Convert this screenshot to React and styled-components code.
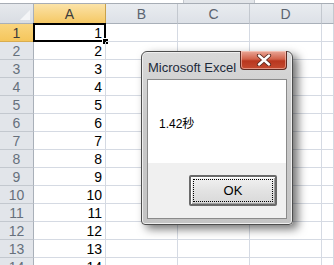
import React from "react";
import styled, { createGlobalStyle } from "styled-components";

const GlobalStyle = createGlobalStyle`
    html, body {
        margin: 0;
        padding: 0;
        background: #ffffff;
        overflow: hidden;
    }
`;

const COLUMNS = ["A", "B", "C", "D", ""];
const ROWS = Array.from({ length: 14 }, (_, i) => i + 1);

const App = () => {
    return (
        <Page>
            <GlobalStyle />
            <TopStrip>
                <ScrollStub />
            </TopStrip>
            <Sheet>
                <Corner />
                {COLUMNS.map((c, i) => (
                    <ColHeader key={c + i} $active={c === "A"}>
                        {c}
                    </ColHeader>
                ))}
                {ROWS.map((r) => (
                    <React.Fragment key={r}>
                        <RowHeader $active={r === 1}>{r}</RowHeader>
                        <Cell $active={r === 1}>{r}</Cell>
                        <Cell />
                        <Cell />
                        <Cell />
                        <Cell />
                    </React.Fragment>
                ))}
            </Sheet>

            <Dialog>
                <TitleBar>
                    <Title>Microsoft Excel</Title>
                    <CloseButton>
                        <svg width="16" height="12" viewBox="0 0 16 12">
                            <path
                                d="M3 1.5 L13 10.5 M13 1.5 L3 10.5"
                                stroke="#5a2a20"
                                strokeWidth="4.2"
                                strokeLinecap="round"
                            />
                            <path
                                d="M3 1.5 L13 10.5 M13 1.5 L3 10.5"
                                stroke="#ffffff"
                                strokeWidth="2.4"
                                strokeLinecap="round"
                            />
                        </svg>
                    </CloseButton>
                </TitleBar>
                <Body>
                    <Message>1.42秒</Message>
                    <ButtonBar>
                        <OkButton>
                            <FocusRing>OK</FocusRing>
                        </OkButton>
                    </ButtonBar>
                </Body>
            </Dialog>
        </Page>
    );
};

export default App;

const Page = styled.div`
    position: relative;
    width: 334px;
    height: 265px;
    overflow: hidden;
    font-family: "Liberation Sans", Arial, sans-serif;
`;

const TopStrip = styled.div`
    height: 3px;
    border-bottom: 1px solid #a7adb5;
    display: flex;
    justify-content: flex-start;
`;

const ScrollStub = styled.div`
    margin-left: 183px;
    width: 70px;
    height: 3px;
    background: #e3e6ea;
    border-left: 1px solid #c4c8ce;
    border-right: 1px solid #c4c8ce;
`;

const Sheet = styled.div`
    display: grid;
    grid-template-columns: 34px 72px 72px 72px 72px 1fr;
    grid-auto-rows: 18px;
    grid-template-rows: 20px;
`;

const Corner = styled.div`
    position: relative;
    background: linear-gradient(#e6e9ed, #d9dde3);
    border-right: 1px solid #a9b0b9;
    border-bottom: 1px solid #a9b0b9;
    box-sizing: border-box;

    &::after {
        content: "";
        position: absolute;
        right: 3px;
        bottom: 3px;
        width: 0;
        height: 0;
        border-left: 10px solid transparent;
        border-bottom: 10px solid #f4f5f7;
    }
`;

const ColHeader = styled.div`
    box-sizing: border-box;
    display: flex;
    align-items: center;
    justify-content: center;
    background: ${(p) =>
        p.$active
            ? "linear-gradient(#fbe3a8, #f5c865)"
            : "linear-gradient(#e9ecf0, #dde1e7)"};
    border-right: 1px solid ${(p) => (p.$active ? "#c9a24a" : "#c3c8cf")};
    border-bottom: 1px solid ${(p) => (p.$active ? "#c9a24a" : "#a9b0b9")};
    color: ${(p) => (p.$active ? "#3c3c3c" : "#5b6470")};
    font-size: 14px;
    padding-top: 1px;
`;

const RowHeader = styled.div`
    box-sizing: border-box;
    display: flex;
    align-items: center;
    justify-content: center;
    background: ${(p) => (p.$active ? "linear-gradient(#f9d57f, #f5c65c)" : "#e2e5ea")};
    border-right: 1px solid #a9b0b9;
    border-bottom: 1px solid ${(p) => (p.$active ? "#d9ad4f" : "#c3c8cf")};
    color: ${(p) => (p.$active ? "#3c3c3c" : "#66707c")};
    font-size: 14px;
`;

const Cell = styled.div`
    position: relative;
    box-sizing: border-box;
    display: flex;
    align-items: center;
    justify-content: flex-end;
    padding-right: 3px;
    border-right: 1px solid #d5dae3;
    border-bottom: 1px solid #d5dae3;
    color: #000000;
    font-size: 14px;
    line-height: 1;

    ${(p) =>
        p.$active &&
        `
        &::before {
            content: "";
            position: absolute;
            left: -1px;
            top: -1px;
            right: -1px;
            bottom: -1px;
            border: 2px solid #000000;
            pointer-events: none;
        }
        &::after {
            content: "";
            position: absolute;
            right: -4px;
            bottom: -4px;
            width: 5px;
            height: 5px;
            background: #000000;
            border: 1px solid #ffffff;
        }
    `}
`;

const Dialog = styled.div`
    position: absolute;
    left: 141px;
    top: 51px;
    width: 152px;
    height: 174px;
    box-sizing: border-box;
    display: flex;
    flex-direction: column;
    background: linear-gradient(#d9d9d9, #c9c9c9 40%, #c4c4c4);
    border: 1px solid #4d4d4d;
    border-radius: 6px 6px 4px 4px;
    box-shadow: 5px 4px 10px rgba(0, 0, 0, 0.55), inset 0 0 0 1px #efefef;
    padding: 0 5px 5px 5px;
`;

const TitleBar = styled.div`
    position: relative;
    height: 27px;
    display: flex;
    align-items: center;
    padding-left: 1px;
`;

const Title = styled.span`
    font-family: "Liberation Sans", Arial, sans-serif;
    font-size: 13px;
    color: #1d2a3a;
    padding-top: 3px;
`;

const CloseButton = styled.div`
    position: absolute;
    right: 0px;
    top: -1px;
    width: 47px;
    height: 19px;
    box-sizing: border-box;
    display: flex;
    align-items: center;
    justify-content: center;
    background: linear-gradient(#e9a898, #d2624a 45%, #b8371f 55%, #c44a30);
    border: 1px solid #5e2a22;
    border-top: none;
    border-radius: 0 0 4px 4px;
    box-shadow: inset 0 0 0 1px rgba(255, 220, 210, 0.5);
`;

const Body = styled.div`
    flex: 1;
    display: flex;
    flex-direction: column;
    border: 1px solid #8a8a8a;
    background: #f0f0f0;
`;

const Message = styled.div`
    height: 83px;
    box-sizing: border-box;
    background: #ffffff;
    padding: 34px 0 0 11px;
    font-family: "Liberation Sans", "Noto Sans CJK JP", sans-serif;
    font-size: 12px;
    color: #000000;
`;

const ButtonBar = styled.div`
    flex: 1;
    display: flex;
    justify-content: flex-end;
    align-items: flex-start;
    padding: 12px 9px 0 0;
`;

const OkButton = styled.div`
    width: 88px;
    height: 31px;
    box-sizing: border-box;
    border: 2px solid #6a6a6a;
    border-radius: 2px;
    background: linear-gradient(#f2f2f2, #e3e3e3 50%, #d8d8d8);
    box-shadow: inset 1px 1px 0 #ffffff, inset -1px -1px 0 #a0a0a0;
    padding: 2px;
    display: flex;
`;

const FocusRing = styled.div`
    flex: 1;
    display: flex;
    align-items: center;
    justify-content: center;
    border: 1px dotted #000000;
    font-family: "Liberation Sans", sans-serif;
    font-size: 13px;
    color: #000000;
`;
